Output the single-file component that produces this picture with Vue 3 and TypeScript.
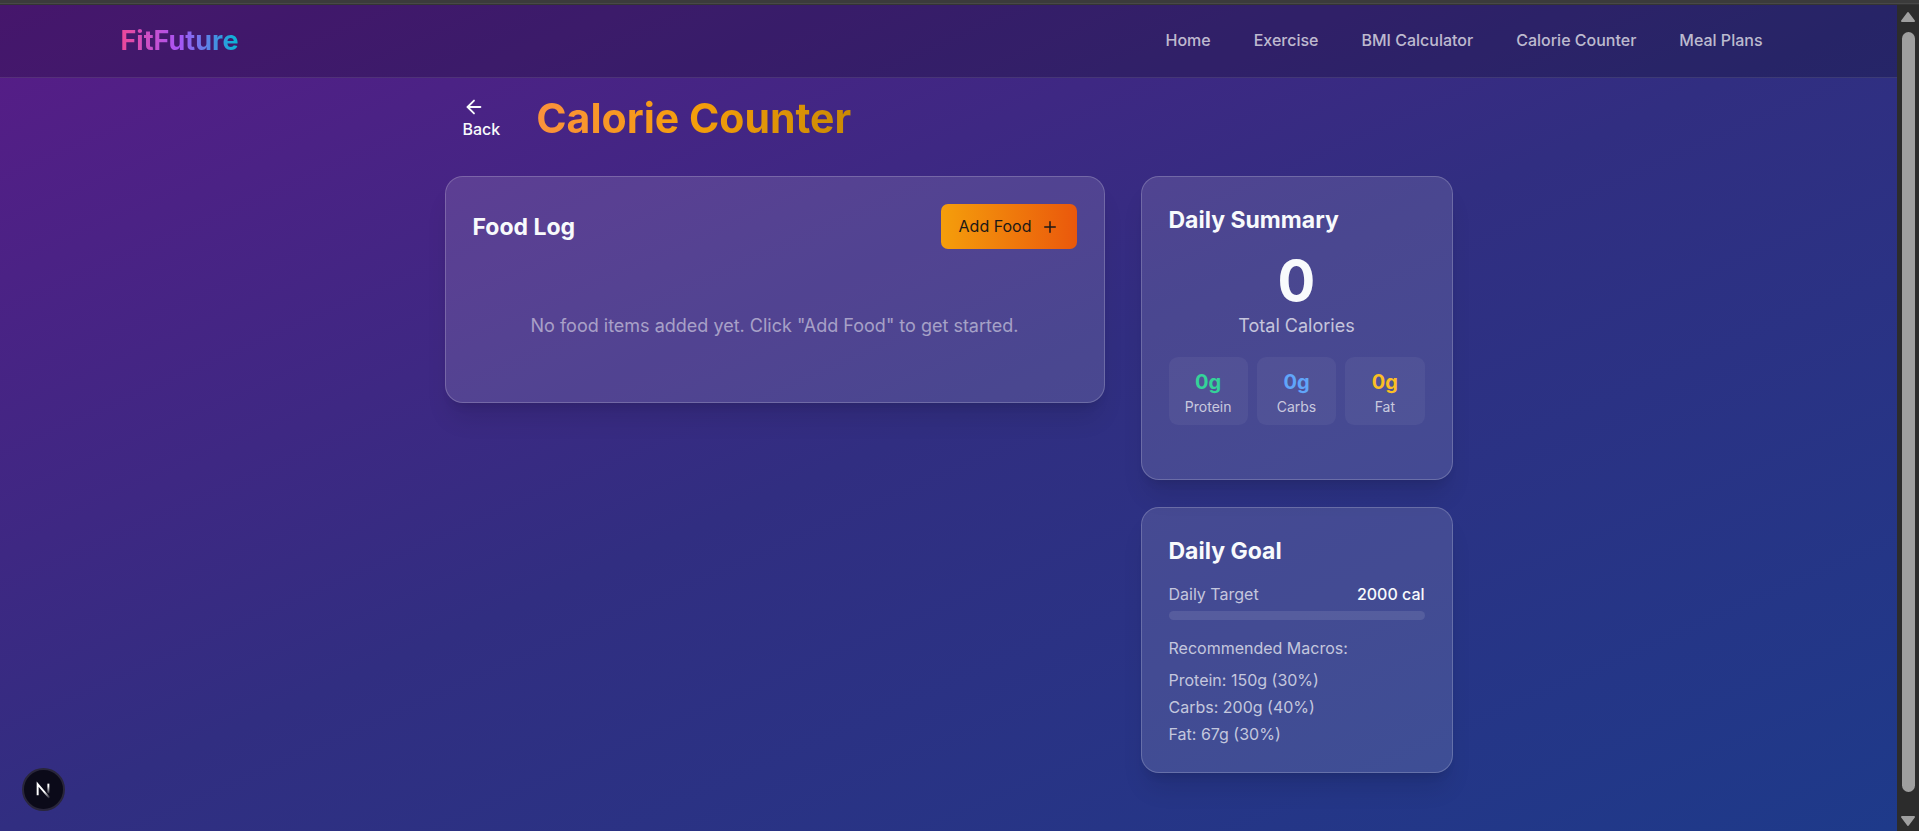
<script setup lang="ts">
interface Macro {
  name: string
  grams: number
  target: number
  share: number
  tone: string
}

const links: string[] = ['Home', 'Exercise', 'BMI Calculator', 'Calorie Counter', 'Meal Plans']

const macros: Macro[] = [
  { name: 'Protein', grams: 0, target: 150, share: 30, tone: 'green' },
  { name: 'Carbs', grams: 0, target: 200, share: 40, tone: 'blue' },
  { name: 'Fat', grams: 0, target: 67, share: 30, tone: 'amber' },
]

const total = 0
const goal = 2000
</script>

<template>
  <div class="window">
    <div class="window-edge"></div>
    <div class="viewport">
      <div class="page">
        <header class="topbar">
          <div class="topbar-inner">
            <a class="logo" href="#">FitFuture</a>
            <nav class="links">
              <a v-for="link in links" :key="link" href="#">{{ link }}</a>
            </nav>
          </div>
        </header>

        <main class="content">
          <div class="heading">
            <a class="back" href="#">
              <svg width="22" height="22" viewBox="0 0 24 24" fill="none" stroke="currentColor" stroke-width="2" stroke-linecap="round" stroke-linejoin="round">
                <path d="m12 19-7-7 7-7" />
                <path d="M19 12H5" />
              </svg>
              <span>Back</span>
            </a>
            <h1>Calorie Counter</h1>
          </div>

          <div class="grid">
            <section class="card log">
              <div class="log-head">
                <h2>Food Log</h2>
                <button class="add" type="button">
                  Add Food
                  <svg width="18" height="18" viewBox="0 0 24 24" fill="none" stroke="currentColor" stroke-width="2" stroke-linecap="round">
                    <path d="M5 12h14M12 5v14" />
                  </svg>
                </button>
              </div>
              <p class="empty">No food items added yet. Click "Add Food" to get started.</p>
            </section>

            <div class="side">
              <section class="card">
                <h2>Daily Summary</h2>
                <div class="total">{{ total }}</div>
                <p class="total-label">Total Calories</p>
                <div class="tiles">
                  <div v-for="m in macros" :key="m.name" class="tile">
                    <strong :class="m.tone">{{ m.grams }}g</strong>
                    <span>{{ m.name }}</span>
                  </div>
                </div>
              </section>

              <section class="card">
                <h2>Daily Goal</h2>
                <div class="target">
                  <span>Daily Target</span>
                  <b>{{ goal }} cal</b>
                </div>
                <div class="bar"><div class="fill" :style="{ width: (total / goal) * 100 + '%' }"></div></div>
                <p class="rec">Recommended Macros:</p>
                <ul class="rec-list">
                  <li v-for="m in macros" :key="m.name">{{ m.name }}: {{ m.target }}g ({{ m.share }}%)</li>
                </ul>
              </section>
            </div>
          </div>
        </main>
      </div>

      <div class="scroll" aria-hidden="true">
        <svg width="16" height="12" viewBox="0 0 16 12"><path d="M8 2 14 10H2Z" fill="#9f9f9f" stroke="#9f9f9f" stroke-width="2" stroke-linejoin="round" /></svg>
        <div class="thumb"></div>
        <svg width="16" height="12" viewBox="0 0 16 12"><path d="M8 10 2 2H14Z" fill="#9f9f9f" stroke="#9f9f9f" stroke-width="2" stroke-linejoin="round" /></svg>
      </div>
    </div>

    <button class="dev" type="button" aria-label="Open developer tools">
      <svg width="39" height="39" viewBox="0 0 40 40" fill="none">
        <defs>
          <linearGradient id="stem" x1="0" y1="13" x2="0" y2="25" gradientUnits="userSpaceOnUse">
            <stop offset="0.3" stop-color="#fff" />
            <stop offset="1" stop-color="#fff" stop-opacity="0" />
          </linearGradient>
          <linearGradient id="diag" x1="20" y1="20" x2="27" y2="29" gradientUnits="userSpaceOnUse">
            <stop offset="0.2" stop-color="#fff" />
            <stop offset="1" stop-color="#fff" stop-opacity="0" />
          </linearGradient>
        </defs>
        <path d="M14 26V14.500L26 28.500" stroke="url(#diag)" stroke-width="2" />
        <path d="M25 14V24" stroke="url(#stem)" stroke-width="2" />
      </svg>
    </button>
  </div>
</template>

<style>
body {
  margin: 0;
  overflow: hidden;
}
</style>

<style scoped>
.window {
  display: flex;
  flex-direction: column;
  height: 100vh;
  overflow: hidden;
  color: #f8fafc;
  font-family: Inter, "Open Sans", sans-serif;
  font-size: 16px;
}

.window * {
  box-sizing: border-box;
}

.window-edge {
  flex: none;
  height: 5px;
  background: linear-gradient(#3b3b3b 3px, #484848 3px, #484848 4px, #343434 4px);
}

.viewport {
  display: flex;
  flex: 1;
  min-height: 0;
}

.page {
  flex: 1;
  min-width: 0;
  background: linear-gradient(to bottom right, #581c87, #312e81 50%, #1e3a8a);
}

.topbar {
  border-bottom: 1px solid rgba(255, 255, 255, 0.1);
  background: rgba(0, 0, 0, 0.2);
}

.topbar-inner {
  display: flex;
  align-items: center;
  justify-content: space-between;
  max-width: 1656px;
  height: 72px;
  margin: 0 auto;
  padding-right: 14px;
}

a {
  color: inherit;
  text-decoration: none;
}

.logo {
  background: linear-gradient(to right, #ec4899, #a855f7, #06b6d4);
  background-clip: text;
  color: transparent;
  font-size: 27px;
  font-weight: 700;
  line-height: 36px;
}

.links {
  display: flex;
  gap: 43px;
  padding-bottom: 2px;
  color: rgba(255, 255, 255, 0.7);
  font-weight: 500;
}

.content {
  max-width: 1008px;
  margin: 0 auto;
}

.heading {
  display: flex;
  align-items: center;
  gap: 36px;
  height: 98px;
  padding: 0 0 18px 18px;
}

.back {
  display: flex;
  flex-direction: column;
  font-weight: 500;
  line-height: 23px;
}

h1,
h2,
p,
ul {
  margin: 0;
}

h1 {
  background: linear-gradient(to right, #fb923c, #f59e0b, #ca8a04);
  background-clip: text;
  color: transparent;
  font-size: 41px;
  font-weight: 700;
  line-height: 48px;
}

h2 {
  font-size: 23px;
  font-weight: 700;
  line-height: 32px;
}

.grid {
  display: grid;
  grid-template-columns: repeat(3, 1fr);
  column-gap: 36px;
  align-items: start;
}

.log {
  grid-column: span 2;
}

.side {
  display: grid;
  gap: 27px;
}

.card {
  padding: 27px;
  border: 1px solid rgba(255, 255, 255, 0.2);
  border-radius: 18px;
  background: rgba(255, 255, 255, 0.12);
  box-shadow: 0 20px 25px -5px rgba(0, 0, 0, 0.1), 0 8px 10px -6px rgba(0, 0, 0, 0.1);
}

.log-head {
  display: flex;
  align-items: center;
  justify-content: space-between;
}

.add {
  display: flex;
  align-items: center;
  gap: 9px;
  height: 45px;
  padding: 0 18px 2px;
  border: 0;
  border-radius: 7px;
  background: linear-gradient(to right, #f59e0b, #ea580c);
  color: #1c1917;
  font: inherit;
}

.add svg {
  margin-top: 2px;
}

.empty {
  padding: 63px 0 36px;
  color: rgba(255, 255, 255, 0.5);
  font-size: 18px;
  line-height: 27px;
  text-align: center;
}

.total {
  margin: 18px 0 4px;
  font-size: 56px;
  font-weight: 700;
  line-height: 54px;
  text-align: center;
}

.total-label {
  margin-bottom: 18px;
  color: rgba(255, 255, 255, 0.7);
  font-size: 18px;
  line-height: 27px;
  text-align: center;
}

.tiles {
  display: grid;
  grid-template-columns: repeat(3, 1fr);
  gap: 9px;
  margin-bottom: 27px;
}

.tile {
  display: flex;
  flex-direction: column;
  align-items: center;
  padding: 9px;
  border-radius: 9px;
  background: rgba(255, 255, 255, 0.05);
}

.tile strong {
  font-size: 20px;
  line-height: 32px;
}

.tile span {
  color: rgba(255, 255, 255, 0.7);
  font-size: 14px;
  line-height: 18px;
}

.green {
  color: #34d399;
}

.blue {
  color: #60a5fa;
}

.amber {
  color: #fbbf24;
}

.target {
  display: flex;
  justify-content: space-between;
  margin: 17px 0 7px;
  line-height: 20px;
}

.target span {
  color: rgba(255, 255, 255, 0.7);
}

.target b {
  font-weight: 500;
}

.bar {
  height: 9px;
  overflow: hidden;
  border-radius: 5px;
  background: rgba(255, 255, 255, 0.1);
}

.fill {
  height: 100%;
  background: #f59e0b;
}

.rec {
  margin: 17px 0 10px;
  color: rgba(255, 255, 255, 0.7);
  line-height: 22px;
}

.rec-list {
  display: grid;
  gap: 5px;
  padding: 0;
  color: rgba(255, 255, 255, 0.7);
  line-height: 22px;
  list-style: none;
}

.scroll {
  display: flex;
  flex-direction: column;
  flex: none;
  align-items: center;
  justify-content: space-between;
  width: 22px;
  padding: 6px 0 4px;
  background: #2c2c2c;
}

.thumb {
  flex: 1;
  width: 13px;
  margin: 9px 0 23px;
  border-radius: 7px;
  background: #9f9f9f;
}

.dev {
  position: fixed;
  bottom: 20px;
  left: 22px;
  width: 43px;
  height: 43px;
  padding: 0;
  border: 2px solid #29263a;
  border-radius: 50%;
  background: #0b0a19;
}

.dev svg {
  display: block;
}
</style>
